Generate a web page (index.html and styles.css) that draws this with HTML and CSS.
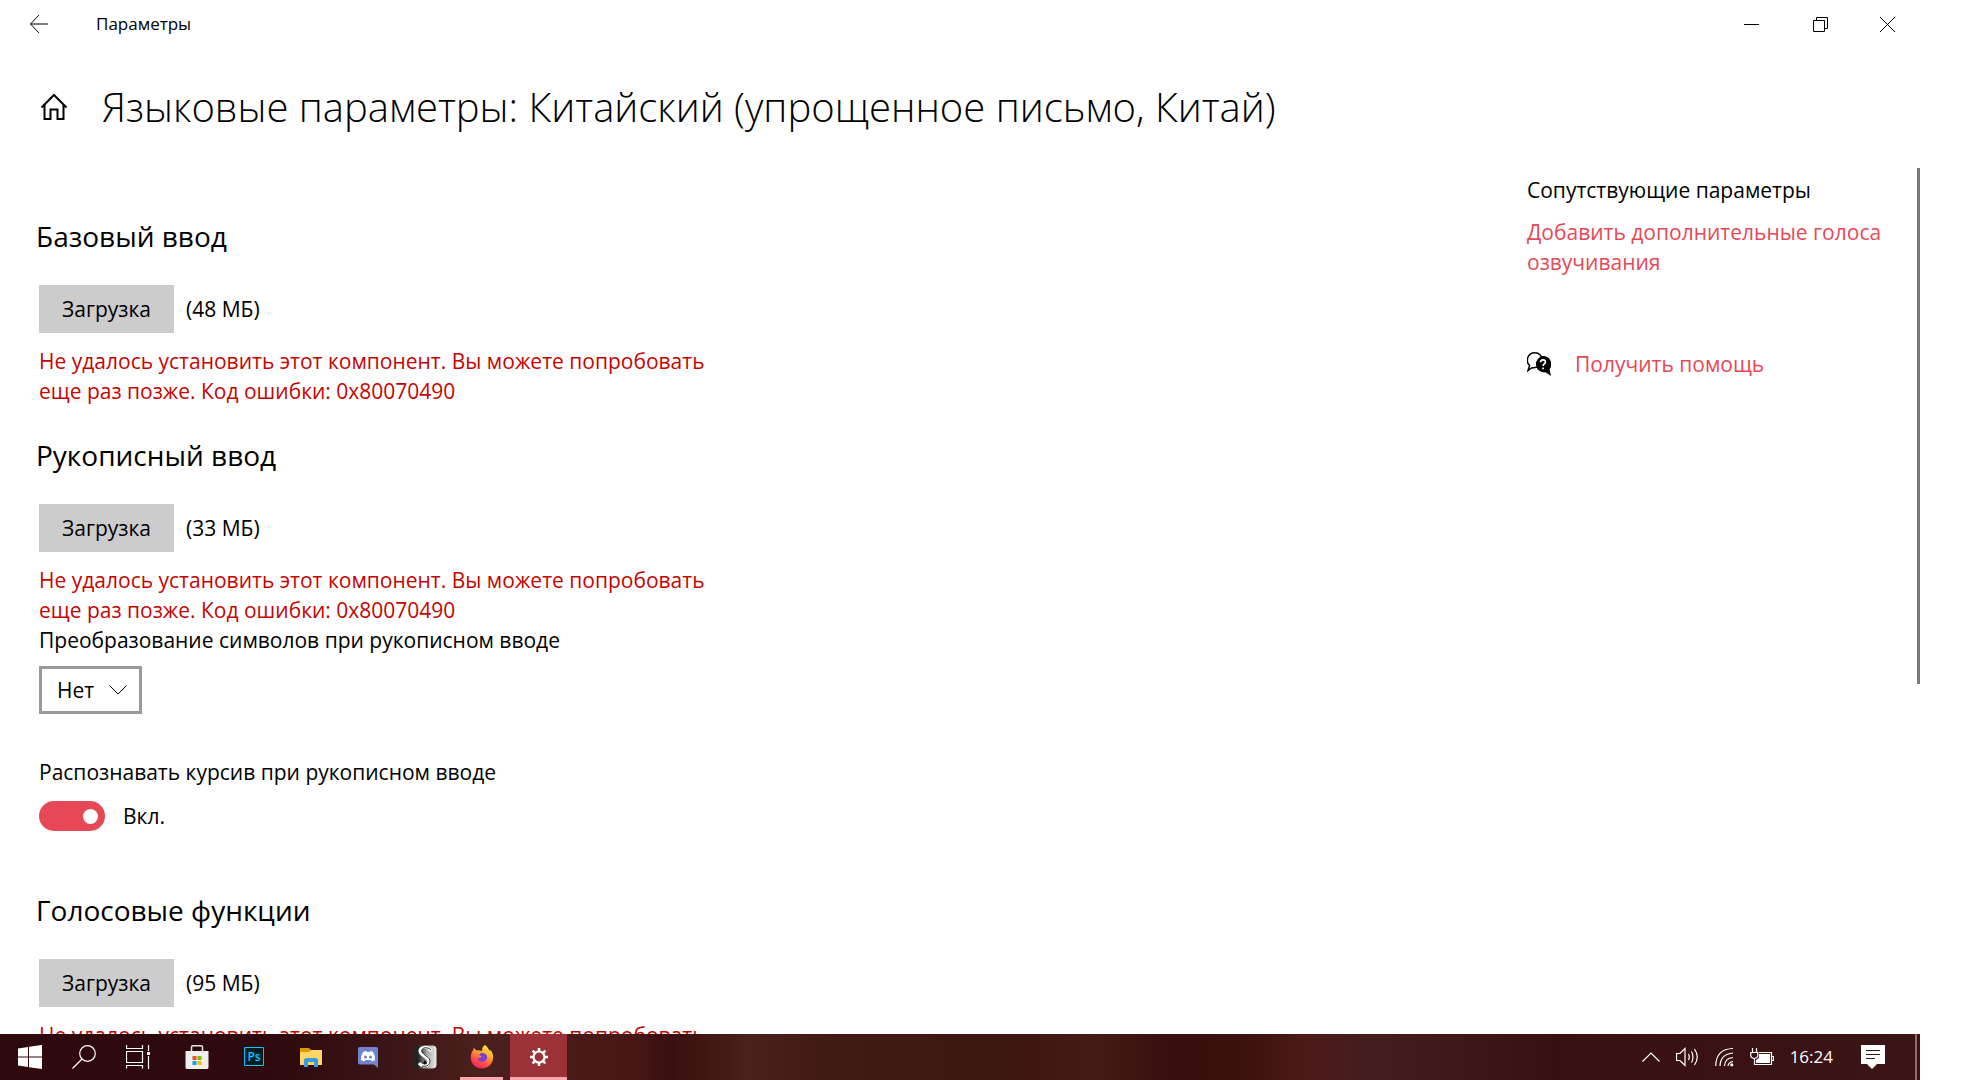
FILE: index.html
```html
<!DOCTYPE html>
<html lang="ru">
<head>
<meta charset="utf-8">
<title>Параметры</title>
<link rel="stylesheet" href="styles.css">
</head>
<body>
<div class="window">
  <header class="titlebar">
    <button class="back" aria-label="Назад"><svg width="20" height="20" viewBox="0 0 20 20"><path d="M19 10H1.500M10 1L1.500 10L10 19"/></svg></button>
    <span class="app-name">Параметры</span>
    <div class="caption-buttons">
      <button class="caption" aria-label="Свернуть"><svg width="15" height="15" viewBox="0 0 15 15"><path d="M0 7.500H15"/></svg></button>
      <button class="caption" aria-label="Восстановить"><svg width="15" height="15" viewBox="0 0 15 15"><path d="M.5 3.500H11.500V14.500H.5ZM3.500 3.500V.5H14.500V11.500H11.500"/></svg></button>
      <button class="caption" aria-label="Закрыть"><svg width="15" height="15" viewBox="0 0 15 15"><path d="M0 0L15 15M15 0L0 15"/></svg></button>
    </div>
  </header>

  <div class="page-head">
    <a class="home" href="#home" aria-label="Главная"><svg width="28" height="28" viewBox="0 0 28 28"><path d="M1.500 14.500L14 2L26.500 14.500M4.500 12V26H10.500V16.500H17.500V26H23.500V12"/></svg></a>
    <h1>Языковые параметры: Китайский (упрощенное письмо, Китай)</h1>
  </div>

  <div class="scroller">
    <main class="settings">
      <section class="group">
        <h2>Базовый ввод</h2>
        <div class="download"><button class="load">Загрузка</button><span>(48 МБ)</span></div>
        <p class="error">Не удалось установить этот компонент. Вы можете попробовать еще раз позже. Код ошибки: 0x80070490</p>
      </section>
      <section class="group">
        <h2>Рукописный ввод</h2>
        <div class="download"><button class="load">Загрузка</button><span>(33 МБ)</span></div>
        <p class="error">Не удалось установить этот компонент. Вы можете попробовать еще раз позже. Код ошибки: 0x80070490</p>
        <label class="field-label" for="convert">Преобразование символов при рукописном вводе</label>
        <div class="combo">
          <select id="convert"><option>Нет</option></select>
          <svg class="arrow" width="18" height="10" viewBox="0 0 18 10"><path d="M.5 .5L9 9L17.500 .5"/></svg>
        </div>
        <label class="field-label switch-label" for="cursive">Распознавать курсив при рукописном вводе</label>
        <div class="switch"><input type="checkbox" role="switch" id="cursive" checked><span>Вкл.</span></div>
      </section>
      <section class="group">
        <h2>Голосовые функции</h2>
        <div class="download"><button class="load">Загрузка</button><span>(95 МБ)</span></div>
        <p class="error">Не удалось установить этот компонент. Вы можете попробовать еще раз позже. Код ошибки: 0x80070490</p>
      </section>
    </main>
    <aside class="related">
      <h3>Сопутствующие параметры</h3>
      <a href="#voices">Добавить дополнительные голоса озвучивания</a>
      <div class="help">
        <svg width="24" height="24" viewBox="0 0 24 24">
          <path d="M8 .8A7.400 7.400 0 0 1 15.400 8.200A7.400 7.400 0 0 1 8 15.600L4.500 16L1 18.500L2.600 13.500A7.400 7.400 0 0 1 8 .8Z" fill="#fff" stroke="#000" stroke-width="1.500"/>
          <path d="M16 4A8.200 8.200 0 0 1 22.500 17.300L24 24L18.500 20.300A8.200 8.200 0 1 1 16 4Z"/>
          <path d="M13.600 10.200Q13.700 7.900 16 7.900Q18.400 7.900 18.400 9.900Q18.400 11 17.200 11.900Q16.100 12.700 16.100 14M16.100 15.500V17.300" fill="none" stroke="#fff" stroke-width="1.700"/>
        </svg>
        <a href="#help">Получить помощь</a>
      </div>
    </aside>
    <div class="scrollbar"><div class="thumb"></div></div>
  </div>

  <footer class="taskbar">
    <div class="system">
      <button aria-label="Пуск"><svg width="24" height="24" viewBox="0 0 24 24"><path fill="#fff" d="M0 3.500L10 2V11.500H0ZM11 1.800L24 0V11.500H11ZM0 12.500H10V22L0 20.500ZM11 12.500H24V24L11 22.200Z"/></svg></button>
      <button aria-label="Поиск"><svg class="line" width="24" height="24" viewBox="0 0 24 24"><circle cx="15.500" cy="8.500" r="7.800"/><path d="M10 14L.5 23.500"/></svg></button>
      <button aria-label="Представление задач"><svg class="line" width="24" height="24" viewBox="0 0 24 24"><path d="M.5 0V3.500H16.500V0M.5 6.500H16.500V17.500H.5ZM.5 23.500V20.500H16.500V23.500M22.500 0V6M22.500 11V24"/><path d="M21 7H24V10H21Z" fill="#fff" stroke="none"/></svg></button>
    </div>
    <div class="apps">
      <button aria-label="Магазин"><svg width="24" height="24" viewBox="0 0 24 24"><path d="M6.500 7V2Q6.500 .8 8 .8H16Q17.500 .8 17.500 2V7" fill="none" stroke="#e4e4e4" stroke-width="1.500"/><path d="M.5 6H23.500V23L22.500 24H1.500L.5 23Z" fill="#eee"/><path fill="#f25022" d="M7.500 11H11.500V15H7.500Z"/><path fill="#7fba00" d="M12.500 11H16.500V15H12.500Z"/><path fill="#00a4ef" d="M7.500 16H11.500V20H7.500Z"/><path fill="#ffb900" d="M12.500 16H16.500V20H12.500Z"/></svg></button>
      <button aria-label="Photoshop"><svg class="ps" width="20" height="20" viewBox="0 0 20 20"><path d="M.5 .5H19.500V18.500H.5Z" fill="#001d26" stroke="#00c8ff"/><text x="10" y="14" text-anchor="middle">Ps</text></svg></button>
      <button aria-label="Проводник"><svg width="24" height="24" viewBox="0 0 24 24"><path fill="#dc9a00" d="M1 3H10L12 5V8H1Z"/><path fill="#ffd766" d="M1 7H10L12 5H23V20H1Z"/><path fill="#3f9be0" d="M5 22V14.500L6.500 13H17.500L19 14.500V22H15V17H9V22Z"/></svg></button>
      <button aria-label="Discord"><svg width="20" height="22" viewBox="0 0 20 22"><path fill="#7084cf" d="M2 1H18Q20 1 20 3V22L16 18.500H2Q0 18.500 0 16.500V3Q0 1 2 1Z"/><path fill="#fff" d="M5 6L8 5L9 6H11.500L12.500 5L15 6Q17.500 10 17 14L14 15.500L12.800 14H7.500L6 15.500L3 14Q2.500 10 5 6Z"/><circle cx="7.500" cy="11" r="1.500" fill="#7084cf"/><circle cx="12.500" cy="11" r="1.500" fill="#7084cf"/></svg></button>
      <button aria-label="Scrivener"><svg width="24" height="24" viewBox="0 0 24 24"><defs><linearGradient id="scr"><stop offset=".2" stop-color="#222"/><stop offset=".6" stop-color="#aaa"/><stop offset="1" stop-color="#eee"/></linearGradient></defs><rect x=".5" y=".5" width="23" height="23" rx="4" fill="url(#scr)"/><path d="M18 6C15 0 6 2 7 7C8 11 17 12 16 17C15 22 9 22 6 18" fill="none" stroke="#fff" stroke-width="3"/><path d="M18 5C14 1 8 3 9 6C10 11 18 12 17 17C16 21 12 22 9 21" fill="none" stroke="#222" stroke-width="1"/><path d="M12 15L14 18Q12 21 10 18Z" fill="#111"/></svg></button>
      <button class="running" aria-label="Firefox"><svg width="24" height="24" viewBox="0 0 24 24"><defs><linearGradient id="fox" x1=".8" y1="0" x2=".3" y2="1"><stop offset="0" stop-color="#fff04a"/><stop offset=".4" stop-color="#ffa52c"/><stop offset=".7" stop-color="#ff5240"/><stop offset="1" stop-color="#ee2270"/></linearGradient></defs><path fill="url(#fox)" d="M15 0C18 2 18 4 20 6L20.500 5C23 8 23.500 11 23 14C22 20 17 23.500 12 23.500C5 23.500 .5 18 .8 12C.8 9 2 6 3.500 5L3.500 2.500L6.500 5.500Q8 5 9.500 5.500L12 6C12 3 13 1 15 0Z"/><path fill="#7a3fd6" d="M9 9.500Q12 7 15.500 9Q18 11.500 16.500 14.500Q14 18 9.500 16Q6.500 14 8.500 13Q10.500 13 12 11.500Q10 11 9 9.500Z"/></svg></button>
      <button class="running active" aria-label="Параметры"><svg width="20" height="20" viewBox="0 0 20 20"><circle cx="10" cy="10" r="5.500" fill="none" stroke="#fff" stroke-width="2.200"/><g stroke="#fff" stroke-width="2.600"><path d="M10 1V4M10 16V19M1 10H4M16 10H19M3.600 3.600L5.700 5.700M14.300 14.300L16.400 16.400M3.600 16.400L5.700 14.300M14.300 5.700L16.400 3.600"/></g></svg></button>
    </div>
    <div class="tray">
      <svg class="line" width="18" height="10" viewBox="0 0 18 10"><path d="M.5 9.500L9 1L17.500 9.500"/></svg>
      <svg class="line" width="23" height="20" viewBox="0 0 23 20"><path d="M.5 6.500H4L9 1.500V18.500L4 13.500H.5ZM12.500 7Q14 10 12.500 13M15.500 4.500Q18.500 10 15.500 15.500M18.500 2Q24 10 18.500 18"/></svg>
      <svg class="line" width="19" height="20" viewBox="0 0 19 20"><path d="M.7 19Q1 2 18 1.500M5 19Q5.500 7 18 6M9.500 19Q10 11 18 10.500M13 19Q13.500 15 18 14.500"/><circle cx="16.800" cy="17.800" r="1.600" fill="#fff" stroke="none"/></svg>
      <svg class="line" width="24" height="18" viewBox="0 0 24 18"><path d="M2.500 0V4M6.500 0V4M.8 4.500H7.800V8Q7.500 10 4.500 10.500Q1 10 .8 8ZM4.500 10.500V16.500H21.500V4.500H9M21.500 8.500H23.500V12.500H21.500"/><path d="M9 6H20V15H6V12L9 10Z" fill="#fff" stroke="none"/></svg>
      <time>16:24</time>
      <button class="notes" aria-label="Уведомления"><svg width="24" height="24" viewBox="0 0 24 24"><path fill="#fff" d="M0 0H24V19H16L11 24L6 19H0Z"/><path d="M5 5.500H19M5 9.500H19M5 13.500H14" stroke="#3b1214"/></svg></button>
      <span class="desktop-edge"></span>
    </div>
  </footer>
</div>
</body>
</html>
```
FILE: styles.css
```css
* { box-sizing: border-box; }

body {
  margin: 0;
  background: #fff;
  color: #000;
  font: 21px/30px "Open Sans", "Noto Sans", sans-serif;
}

button { border: 0; padding: 0; background: none; color: inherit; font: inherit; }
h1, h2, h3, p { margin: 0; font-weight: 400; }
svg { display: block; flex: none; fill: none; }
a { color: #e74856; text-decoration: none; }

.window {
  display: flex;
  flex-direction: column;
  height: 100vh;
  margin-right: 46px;
  overflow: hidden;
}

/* Title bar */
.titlebar {
  display: flex;
  align-items: center;
  flex: none;
  height: 48px;
  padding-left: 29px;
  font-size: 17px;
}
.titlebar svg { stroke: #000; }
.app-name { margin-left: 47px; }
.caption-buttons { display: flex; align-self: stretch; margin-left: auto; }
.caption { display: grid; place-items: center; width: 69px; }
.caption:last-child { width: 65px; }

/* Page heading */
.page-head {
  display: flex;
  align-items: center;
  flex: none;
  height: 120px;
  gap: 34px;
  padding: 0 40px 2px;
}
.home svg { stroke: #000; stroke-width: 2; }
h1 { font-size: 40px; font-weight: 300; line-height: 54px; }

/* Scrolling content */
.scroller {
  display: flex;
  flex: 1;
  min-height: 0;
  overflow: hidden;
}
.settings { flex: 1; padding: 49px 39px 0; }
.group { max-width: 690px; margin-bottom: 30px; }
.group h2 {
  margin: 0 0 30px -3px;
  font-size: 28px;
  line-height: 38px;
}
.download { display: flex; align-items: center; gap: 12px; margin-bottom: 13px; }
.load { width: 135px; height: 48px; background: #ccc; }
.error { color: #c50500; }
.field-label { display: block; }

.combo {
  position: relative;
  width: 103px;
  margin: 11px 0 43px;
}
.combo select {
  display: block;
  appearance: none;
  width: 100%;
  height: 48px;
  padding: 0 0 0 15px;
  border: 3px solid #999;
  border-radius: 0;
  background: #fff;
  color: #000;
  font: inherit;
}
.arrow {
  position: absolute;
  top: 19px;
  right: 15px;
  stroke: #000;
  pointer-events: none;
}

.switch-label { margin-bottom: 14px; }
.switch { display: flex; align-items: center; gap: 18px; margin-bottom: 60px; }
.switch input {
  display: flex;
  align-items: center;
  justify-content: flex-end;
  appearance: none;
  width: 66px;
  height: 30px;
  margin: 0;
  padding-right: 7px;
  border-radius: 15px;
  background: #e74856;
}
.switch input::before {
  content: "";
  width: 15px;
  height: 15px;
  border-radius: 50%;
  background: #fff;
}

/* Related links */
.related { width: 390px; padding-top: 7px; }
.related h3 { margin-bottom: 12px; font-size: 21px; }
.related > a { display: block; max-width: 370px; }
.help { display: flex; align-items: center; gap: 24px; margin-top: 72px; }
.help svg { fill: #000; }

.scrollbar { width: 3px; padding-bottom: 6px; }
.thumb { height: 60%; background: #7a7a7a; }

/* Taskbar */
.taskbar {
  display: flex;
  flex: none;
  height: 46px;
  color: #fff;
  background: linear-gradient(90deg,
    #2e090d 0%, #2e090d 14%, #3a1416 20%, #4b201d 25%, #4a1a1b 29%, #471716 33%, #3a0f10 35%,
    #4a211b 39%, #421a15 43%, #3d1511 53%, #451b16 57%, #380f0e 61%, #3c1110 65%,
    #4b1a18 68%, #451d1f 71%, #3f1718 76%, #391012 81%, #3b1416 100%);
}
.system, .apps { display: flex; }
.system { padding: 0 3px; }
.system button, .apps button { display: grid; place-items: center; width: 54px; }
.apps button { width: 57px; }
.line { stroke: #fff; stroke-width: 1.2; }
.ps text { fill: #00c8ff; font: 600 12px "Open Sans", sans-serif; }
.apps .running {
  background: linear-gradient(#ffa5b0, #ffa5b0) bottom / 43px 3px no-repeat;
}
.apps .active {
  background: linear-gradient(#ffa5b0, #ffa5b0) bottom / 100% 3px no-repeat #9b3238;
}

.tray { display: flex; align-items: center; gap: 16px; margin-left: auto; font-size: 17px; }
.notes { margin-left: 12px; }
.desktop-edge {
  width: 5px;
  height: 100%;
  margin-left: 14px;
  border-left: 2px solid #8c6e6f;
}
```
